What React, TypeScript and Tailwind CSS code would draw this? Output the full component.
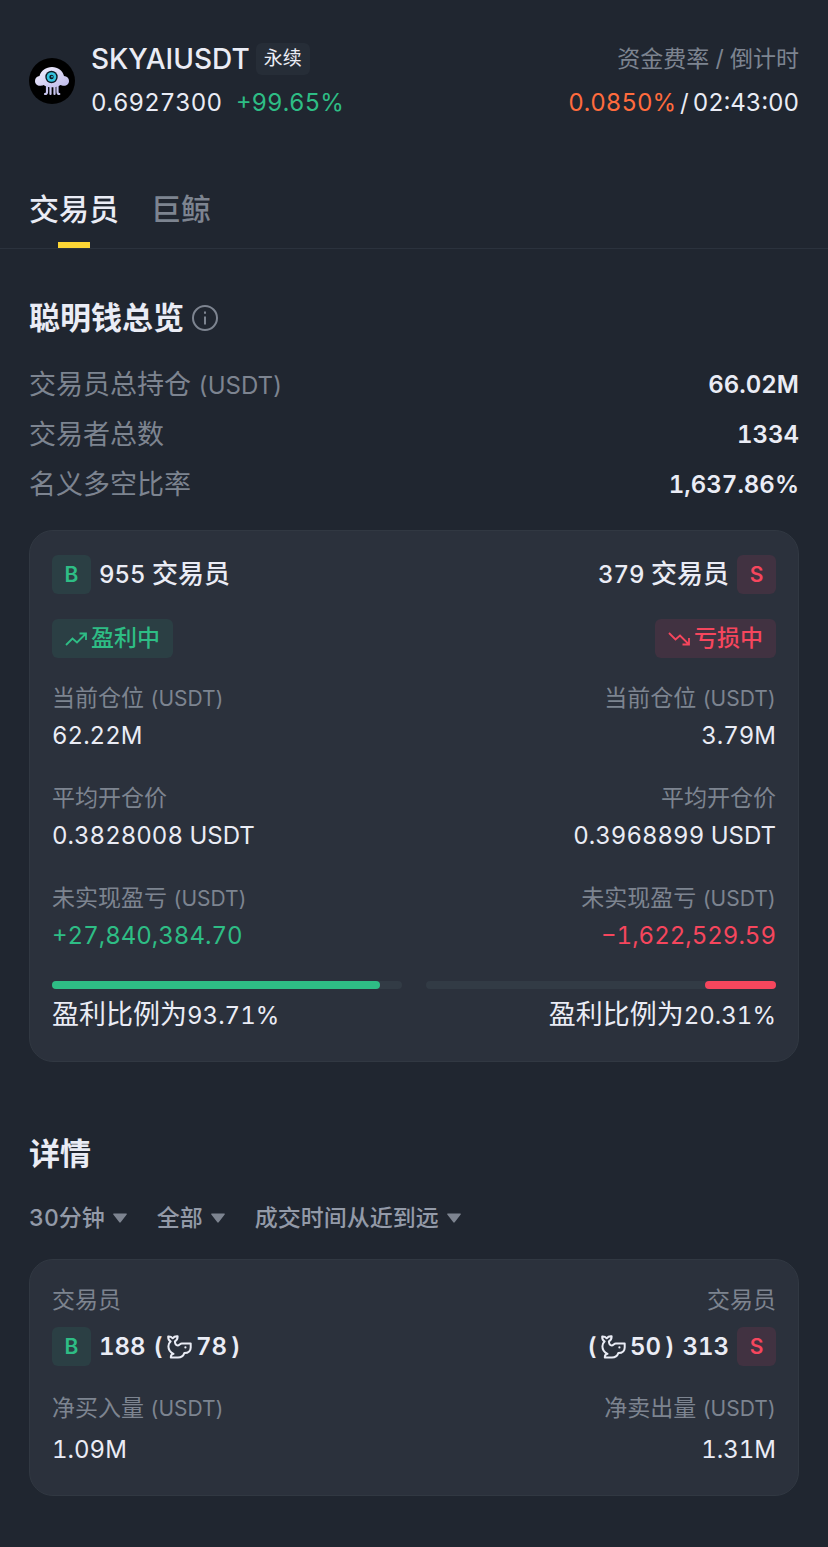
import { useState, type ReactNode } from 'react';

type Side = 'buy' | 'sell';

interface Stat {
  label: string;
  unit?: string;
  value: string;
  colored?: boolean;
}

interface Position {
  side: Side;
  traders: number;
  status: string;
  stats: Stat[];
  ratio: number;
}

const overview: Stat[] = [
  { label: '交易员总持仓', unit: '(USDT)', value: '66.02M' },
  { label: '交易者总数', value: '1334' },
  { label: '名义多空比率', value: '1,637.86%' },
];

const positions: Position[] = [
  {
    side: 'buy',
    traders: 955,
    status: '盈利中',
    stats: [
      { label: '当前仓位', unit: '(USDT)', value: '62.22M' },
      { label: '平均开仓价', value: '0.3828008 USDT' },
      { label: '未实现盈亏', unit: '(USDT)', value: '+27,840,384.70', colored: true },
    ],
    ratio: 93.71,
  },
  {
    side: 'sell',
    traders: 379,
    status: '亏损中',
    stats: [
      { label: '当前仓位', unit: '(USDT)', value: '3.79M' },
      { label: '平均开仓价', value: '0.3968899 USDT' },
      { label: '未实现盈亏', unit: '(USDT)', value: '−1,622,529.59', colored: true },
    ],
    ratio: 20.31,
  },
];

const filters = [
  { name: '时间范围', options: ['30分钟', '1小时', '4小时', '24小时'] },
  { name: '类型', options: ['全部', '交易员', '巨鲸'] },
  { name: '排序', options: ['成交时间从近到远', '成交时间从远到近'] },
];

export default function App() {
  const [tab, setTab] = useState('交易员');

  return (
    <div className="min-h-screen bg-[#202630] pt-[37px] pb-12 font-['Inter','Noto_Sans_CJK_SC',sans-serif] text-[24px] text-[#eaecf5] tabular-nums">
      {/* Symbol header */}
      <header className="flex items-center justify-between px-[29px]">
        <div className="flex items-center gap-4">
          <TokenLogo />
          <div>
            <div className="flex h-11 items-center gap-1.5">
              <h1 className="text-[28px] font-medium">SKYAIUSDT</h1>
              <span className="rounded-md bg-[#262d37] px-2 text-[19px] leading-8">永续</span>
            </div>
            <div className="flex gap-3.5 leading-[44px]">
              <span>0.6927300</span>
              <span className="text-[#2ebd85]">+99.65%</span>
            </div>
          </div>
        </div>
        <div className="text-right leading-[44px]">
          <div className="text-[23px] text-[#7d8490]">资金费率 / 倒计时</div>
          <div className="flex justify-end gap-1">
            <span className="text-[#ff6b3d]">0.0850%</span>
            <span>/</span>
            <span>02:43:00</span>
          </div>
        </div>
      </header>

      {/* Tabs */}
      <div role="tablist" className="mt-[51px] flex gap-8 border-b border-[#2b323d] px-[29px]">
        {['交易员', '巨鲸'].map((name) => (
          <button
            key={name}
            type="button"
            role="tab"
            aria-selected={tab === name}
            onClick={() => setTab(name)}
            className={`flex flex-col items-center text-[30px] leading-[66px] font-medium ${tab === name ? '' : 'text-[#7d8490]'}`}
          >
            {name}
            <span className={`h-1.5 w-8 ${tab === name ? 'bg-[#fcd535]' : ''}`} />
          </button>
        ))}
      </div>

      <main className="px-[29px]">
        {/* Overview */}
        <div className="mt-[46px] flex items-center gap-2">
          <h2 className="text-[31px] leading-[46px] font-semibold">聪明钱总览</h2>
          <button type="button" aria-label="说明" className="text-[#7d8490]">
            <svg viewBox="0 0 26 26" className="h-[26px] w-[26px]" fill="none" stroke="currentColor" strokeWidth="2">
              <circle cx="13" cy="13" r="12" />
              <path d="M13 11.5v8M13 6.5v2.2" />
            </svg>
          </button>
        </div>
        <dl className="mt-[19px]">
          {overview.map((row) => (
            <div key={row.label} className="flex justify-between leading-[50px]">
              <dt className="text-[27px] text-[#7d8490]">
                {row.label} <span className="text-[24px] leading-none">{row.unit}</span>
              </dt>
              <dd className="font-semibold">{row.value}</dd>
            </div>
          ))}
        </dl>

        <Card>
          {positions.map((p) => (
            <PositionColumn key={p.side} position={p} />
          ))}
        </Card>

        {/* Details */}
        <h2 className="mt-[69px] text-[31px] leading-[46px] font-semibold">详情</h2>
        <div className="mt-[23px] mb-[23px] flex gap-[30px]">
          {filters.map((f) => (
            <Filter key={f.name} name={f.name} options={f.options} />
          ))}
        </div>
        <Card>
          <FlowColumn side="buy" count={188} whales={78} label="净买入量" value="1.09M" />
          <FlowColumn side="sell" count={313} whales={50} label="净卖出量" value="1.31M" />
        </Card>
      </main>
    </div>
  );
}

function Card({ children }: { children: ReactNode }) {
  return (
    <section className="mt-5 grid grid-cols-2 gap-6 rounded-3xl border border-[#313842] bg-[#2b313c] px-[22px] pt-6 pb-[26px]">
      {children}
    </section>
  );
}

function SideBadge({ side }: { side: Side }) {
  return (
    <span
      className={`w-[39px] rounded-md text-center text-[21px] leading-[39px] font-semibold ${
        side === 'buy' ? 'bg-[#2b3f44] text-[#2ebd85]' : 'bg-[#413241] text-[#f6465d]'
      }`}
    >
      {side === 'buy' ? 'B' : 'S'}
    </span>
  );
}

function PositionColumn({ position }: { position: Position }) {
  const buy = position.side === 'buy';
  const color = buy ? 'text-[#2ebd85]' : 'text-[#f6465d]';

  return (
    <div className={`flex flex-col ${buy ? 'items-start' : 'items-end text-right'}`}>
      <div className={`flex items-center gap-2 leading-[39px] font-medium ${buy ? '' : 'flex-row-reverse'}`}>
        <SideBadge side={position.side} />
        <span>
          {position.traders} <span className="text-[26px] leading-none">交易员</span>
        </span>
      </div>
      <div className={`mt-[25px] flex items-center gap-1 rounded-md px-[13px] text-[23px] leading-[39px] font-medium ${color} ${buy ? 'bg-[#2b3f44]' : 'bg-[#413241]'}`}>
        <TrendIcon up={buy} />
        {position.status}
      </div>
      <dl className="mt-[22px] flex flex-col gap-6">
        {position.stats.map((s) => (
          <div key={s.label}>
            <dt className="text-[23px] leading-9 text-[#7d8490]">
              {s.label} <span className="text-[21px] leading-none">{s.unit}</span>
            </dt>
            <dd className={`leading-10 ${s.colored ? color : ''}`}>{s.value}</dd>
          </div>
        ))}
      </dl>
      <div className={`mt-[25px] flex h-2 w-full rounded-full bg-[#323b45] ${buy ? '' : 'justify-end'}`}>
        <div className={`rounded-full ${buy ? 'bg-[#2ebd85]' : 'bg-[#f6465d]'}`} style={{ width: `${position.ratio}%` }} />
      </div>
      <p className="mt-2 leading-[38px]">
        <span className="text-[27px] leading-none">盈利比例为</span>
        {position.ratio}%
      </p>
    </div>
  );
}

interface FlowColumnProps {
  side: Side;
  count: number;
  whales: number;
  label: string;
  value: string;
}

function FlowColumn({ side, count, whales, label, value }: FlowColumnProps) {
  const buy = side === 'buy';
  const whaleCount = (
    <span className="flex items-center gap-1">
      <span>(</span>
      <WhaleIcon />
      <span>{whales}</span>
      <span>)</span>
    </span>
  );

  return (
    <div className={`flex flex-col ${buy ? 'items-start' : 'items-end'}`}>
      <div className="text-[23px] leading-8 text-[#7d8490]">交易员</div>
      <div className="mt-[11px] flex items-center gap-2 leading-[39px] font-semibold">
        {buy ? (
          <>
            <SideBadge side={side} />
            <span>{count}</span>
            {whaleCount}
          </>
        ) : (
          <>
            {whaleCount}
            <span>{count}</span>
            <SideBadge side={side} />
          </>
        )}
      </div>
      <div className="mt-6 text-[23px] leading-9 text-[#7d8490]">
        {label} <span className="text-[21px] leading-none">(USDT)</span>
      </div>
      <div className="mt-[5px] leading-[38px]">{value}</div>
    </div>
  );
}

function Filter({ name, options }: { name: string; options: string[] }) {
  return (
    <label className="relative flex items-center text-[23px] text-[#939aa8]">
      <select aria-label={name} className="h-9 appearance-none bg-transparent pr-[22px] font-medium outline-none [field-sizing:content]">
        {options.map((o) => (
          <option key={o} className="bg-[#202630]">
            {o}
          </option>
        ))}
      </select>
      <svg viewBox="0 0 14 10" className="pointer-events-none absolute right-0 h-2.5 w-3.5" fill="#7d8490">
        <path d="M0.8 0.5h12.4a.6.6 0 0 1 .5 1L7.7 9.2a.9.9 0 0 1-1.4 0L.3 1.5a.6.6 0 0 1 .5-1z" />
      </svg>
    </label>
  );
}

function TrendIcon({ up }: { up: boolean }) {
  return (
    <svg viewBox="0 0 22 14" className="h-3.5 w-[22px]" fill="none" stroke="currentColor" strokeWidth="1.8">
      {up ? <path d="M1 13l6.500-6.500 4.500 4L20.500 2M14.500 1.500H21v6.500" /> : <path d="M1 1l6.500 6.500 4.500-4L20.500 12M14.500 12.500H21V6" />}
    </svg>
  );
}

function WhaleIcon() {
  return (
    <svg viewBox="0 0 25 24" className="h-6 w-[25px]" fill="none" stroke="currentColor" strokeWidth="2" strokeLinejoin="round" strokeLinecap="round">
      <path d="M3.600 6.400C1.900 5.600 1.100 3.900 1.200 1.600c1.800-.1 3.400.4 4.500 1.700C6.800 1.800 8.400 1.100 10.600 1.300c.1 2.400-.8 4-2.700 5 0 2.600 1 4.100 2.900 4.100 1.600 0 2.200-2 4-2h8.900v4c0 3.400-2.300 5.500-6.400 5.700-1 2.900-3.300 4.400-6.300 4.400H3.800c0-2.200.9-3.400 2.700-3.700C3.100 17.200 1.400 14.400 1.400 11.200c0-2 .8-3.600 2.200-4.800z" />
      <circle cx="18.400" cy="12.400" r="1.100" fill="currentColor" stroke="none" />
    </svg>
  );
}

function TokenLogo() {
  return (
    <svg viewBox="0 0 46 46" className="h-[46px] w-[46px]">
      <defs>
        <linearGradient id="cloud" x1="0" y1="0" x2="1" y2="1">
          <stop offset="0" stopColor="#f4f2ff" />
          <stop offset="1" stopColor="#bdb9ea" />
        </linearGradient>
      </defs>
      <circle cx="23" cy="23" r="23" fill="#000" />
      <path
        d="M10.500 18C12 12.500 17 9 23 9s10.700 3.500 12 9c3 .2 5 2.300 5 5 0 3-2.200 4.800-5 4.800-1.700 0-2.500-.3-3.500-.8-2.200 1.800-5 2.300-8.500 2.300s-6.300-.5-8.500-2.300c-1 .6-2 .8-3.500.8-2.800 0-5-1.800-5-4.800s2-4.800 4.500-5z"
        fill="url(#cloud)"
      />
      <path d="M18 28v6c0 1.500-.8 2-2 2M21.500 28v8M25.500 28v8M28.500 28v6c0 1.500.6 2 1.800 2" fill="none" stroke="#c9c6f0" strokeWidth="2.200" strokeLinecap="round" />
      <circle cx="22.500" cy="19" r="6.200" fill="#0b1a24" />
      <circle cx="22.500" cy="19" r="4.800" fill="#35c3df" />
      <circle cx="22.500" cy="19" r="2.200" fill="#0b1a24" />
      <circle cx="23" cy="18.700" r="0.900" fill="#35c3df" />
    </svg>
  );
}
